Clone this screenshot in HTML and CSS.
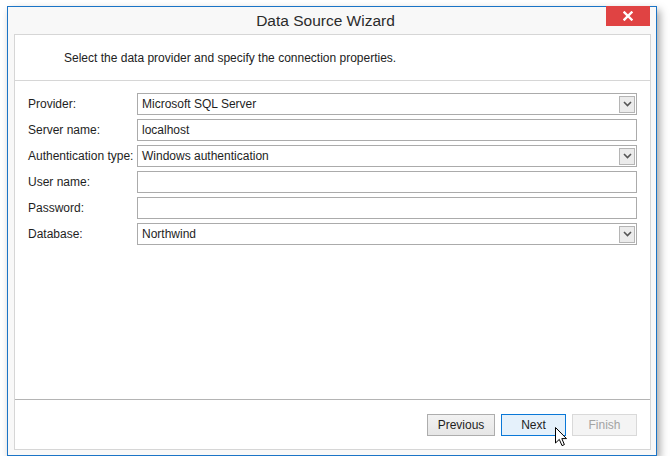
FILE: index.html
```html
<!DOCTYPE html>
<html>
<head>
<meta charset="utf-8">
<link rel="stylesheet" href="styles.css">
</head>
<body>
<div class="window">
  <div class="titlebar">
    <span class="title">Data Source Wizard</span>
    <div class="close">
      <svg width="10" height="10" viewBox="0 0 10 10"><path d="M1.5 1.5 L8.5 8.5 M8.5 1.5 L1.5 8.5" stroke="#fff" stroke-width="2.4" stroke-linecap="square"/></svg>
    </div>
  </div>
  <div class="panel">
    <div class="header">Select the data provider and specify the connection properties.</div>
    <div class="body">
      <div class="form">
        <label class="lbl">Provider:</label>
        <div class="field combo"><span class="val">Microsoft SQL Server</span><span class="dd"><svg width="9" height="6" viewBox="0 0 9 6"><path d="M1 1 L4.5 4.5 L8 1" fill="none" stroke="#555" stroke-width="1.6"/></svg></span></div>
        <label class="lbl">Server name:</label>
        <div class="field"><span class="val">localhost</span></div>
        <label class="lbl">Authentication type:</label>
        <div class="field combo"><span class="val">Windows authentication</span><span class="dd"><svg width="9" height="6" viewBox="0 0 9 6"><path d="M1 1 L4.5 4.5 L8 1" fill="none" stroke="#555" stroke-width="1.6"/></svg></span></div>
        <label class="lbl">User name:</label>
        <div class="field"></div>
        <label class="lbl">Password:</label>
        <div class="field"></div>
        <label class="lbl">Database:</label>
        <div class="field combo"><span class="val">Northwind</span><span class="dd"><svg width="9" height="6" viewBox="0 0 9 6"><path d="M1 1 L4.5 4.5 L8 1" fill="none" stroke="#555" stroke-width="1.6"/></svg></span></div>
      </div>
    </div>
    <div class="footer">
      <button class="btn prev">Previous</button>
      <button class="btn next">Next
        <svg class="cursor" width="13" height="20" viewBox="0 0 13 20"><path d="M0.5 0.5 L0.5 16 L4.3 12.4 L7 18.6 L9.4 17.6 L6.8 11.6 L11.5 11.6 Z" fill="#fff" stroke="#000" stroke-width="1" stroke-linejoin="miter"/></svg>
      </button>
      <button class="btn finish">Finish</button>
    </div>
  </div>
</div>
</body>
</html>
```

FILE: styles.css
```css
html, body {
  margin: 0;
  padding: 0;
  background: #ffffff;
}
body {
  font-family: "Liberation Sans", Arial, sans-serif;
  font-size: 12px;
  color: #1e1e1e;
}
.window {
  position: relative;
  margin: 6px 0 0 7px;
  width: 637px;
  height: 443px;
  border: 1px solid #1b74c6;
  background: #f8f8f8;
  box-shadow: 3px 4px 8px rgba(0, 0, 0, 0.35);
  padding: 0 5px 5px 6px;
  box-sizing: content-box;
  display: flex;
  flex-direction: column;
}
.titlebar {
  height: 27px;
  flex: none;
  display: flex;
  align-items: center;
  justify-content: center;
  padding-right: 14px;
}
.title {
  font-size: 15.5px;
  color: #2b2b2b;
}
.close {
  position: absolute;
  top: -1px;
  right: 6px;
  width: 44px;
  height: 20px;
  background: #e04343;
  display: flex;
  align-items: center;
  justify-content: center;
}
.panel {
  flex: 1;
  border: 1px solid #d6d6d6;
  background: #ffffff;
  display: flex;
  flex-direction: column;
}
.header {
  height: 45px;
  flex: none;
  display: flex;
  align-items: center;
  padding-left: 49px;
  border-bottom: 1px solid #d6d6d6;
  color: #222;
}
.body {
  flex: 1;
}
.form {
  display: grid;
  grid-template-columns: 109px 1fr;
  row-gap: 4px;
  padding: 12px 13px 0 13px;
}
.lbl {
  height: 22px;
  display: flex;
  align-items: center;
  white-space: nowrap;
}
.field {
  height: 22px;
  box-sizing: border-box;
  border: 1px solid #ababab;
  background: #fff;
  display: flex;
  align-items: center;
  padding-left: 4px;
  color: #1e1e1e;
}
.field .val {
  flex: 1;
}
.dd {
  width: 14px;
  height: 15px;
  margin-right: 1px;
  border: 1px solid #b5b5b5;
  background: #ebebeb;
  display: flex;
  align-items: center;
  justify-content: center;
}
.footer {
  height: 50px;
  flex: none;
  border-top: 1px solid #b4b4b4;
  display: flex;
  justify-content: flex-end;
  align-items: flex-start;
  padding: 14px 13px 0 0;
  box-sizing: border-box;
  gap: 6px;
}
.btn {
  position: relative;
  height: 22px;
  width: 65px;
  font-family: "Liberation Sans", Arial, sans-serif;
  font-size: 12px;
  color: #1e1e1e;
  border: 1px solid #adadad;
  background: linear-gradient(#f2f2f2, #e6e6e6);
  padding: 0;
  margin: 0;
}
.btn.prev {
  width: 68px;
}
.btn.next {
  border-color: #0a78d7;
  background: #e5f1fb;
}
.btn.finish {
  border-color: #d9d9d9;
  background: #f4f4f4;
  color: #a3a3a3;
}
.cursor {
  position: absolute;
  left: 53px;
  top: 12px;
}
```
